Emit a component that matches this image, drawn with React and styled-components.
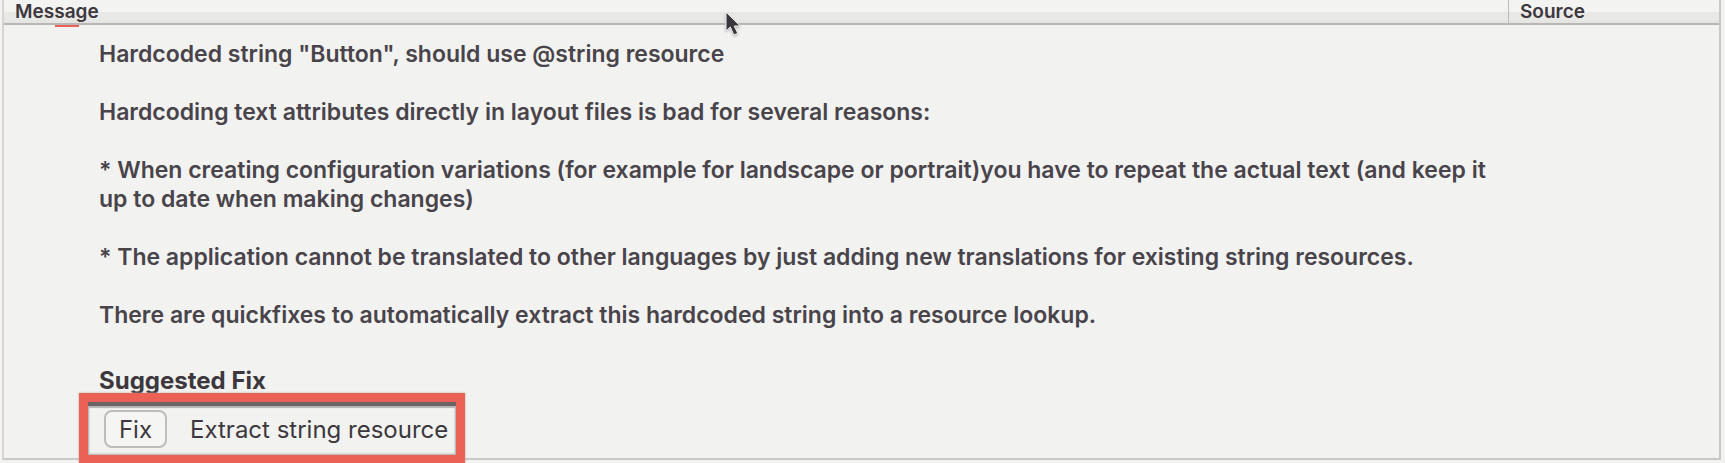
import React from "react";
import styled, { createGlobalStyle } from "styled-components";

const GlobalStyle = createGlobalStyle`
  * { box-sizing: border-box; }
  body {
    margin: 0;
    background: #f2f2f1;
    color: #3c383d;
    font-family: Inter, "Liberation Sans", sans-serif;
    font-size: 24px;
    line-height: 29px;
  }
`;

const Page = styled.main`
  position: relative;
  padding: 0 4px 4px 2px;
`;

const Table = styled.table`
  width: 100%;
  table-layout: fixed;
  border-collapse: separate;
  border-spacing: 0;
  border: 2px solid #c9c7c7;
  border-top: 0;
  border-left-color: #d9d3d3;
`;

const HeadCell = styled.th`
  width: ${(p) => p.$width || "auto"};
  height: 25px;
  padding: 1px 0 0 11px;
  border-bottom: 2px solid #b9b7b6;
  border-left: ${(p) => (p.$divided ? "1px solid #bdbbbb" : "0")};
  background: linear-gradient(#f3f3f2 0 12px, #e8e8e7 12px 19px, #e3e3e2);
  font-size: 19px;
  font-weight: 600;
  line-height: 20px;
  text-align: left;
`;

const DetailCell = styled.td`
  padding: 15px 212px 10px 95px;
  vertical-align: top;
`;

const Paragraph = styled.p`
  margin: 0 0 29px;
  color: #48444a;
  font-size: 23px;
  font-weight: 600;
`;

const FixHeading = styled.h2`
  margin: 36px 0 0;
  font-size: 24px;
  font-weight: 700;
  line-height: 29px;
`;

const FixRow = styled.div`
  position: relative;
  display: flex;
  width: fit-content;
  align-items: center;
  gap: 23px;
  margin-top: 15px;
  padding-left: 5px;
`;

const FixButton = styled.button`
  width: 63px;
  height: 38px;
  padding: 0;
  border: 2px solid #bebdbc;
  border-radius: 8px;
  background: #f5f5f4;
  color: inherit;
  font: inherit;
`;

const Highlight = styled.div`
  position: absolute;
  inset: -17px -17px -16px -20px;
  border: 9px solid #ec6156;
  box-shadow: 0 0 2px #aaa, inset 0 4px 0 #686466, inset 0 6px 1px #b5b3b3,
    inset 0 0 2px 1px #aaa;
  pointer-events: none;
`;

const ErrorMark = styled.span`
  position: absolute;
  top: 25px;
  left: 55px;
  width: 24px;
  height: 2px;
  background: #ec6156;
`;

const Pointer = styled.svg`
  position: absolute;
  top: 10px;
  left: 723px;
  filter: drop-shadow(0 1px 1px #aaa);
`;

const paragraphs = [
  'Hardcoded string "Button", should use @string resource',
  "Hardcoding text attributes directly in layout files is bad for several reasons:",
  "* When creating configuration variations (for example for landscape or portrait)you have to repeat the actual text (and keep it up to date when making changes)",
  "* The application cannot be translated to other languages by just adding new translations for existing string resources.",
  "There are quickfixes to automatically extract this hardcoded string into a resource lookup.",
];

export default function App() {
  return (
    <Page>
      <GlobalStyle />
      <Table>
        <thead>
          <tr>
            <HeadCell scope="col">Message</HeadCell>
            <HeadCell scope="col" $width="211px" $divided>Source</HeadCell>
          </tr>
        </thead>
        <tbody>
          <tr>
            <DetailCell colSpan={2}>
              {paragraphs.map((text) => (
                <Paragraph key={text}>{text}</Paragraph>
              ))}
              <FixHeading>Suggested Fix</FixHeading>
              <FixRow>
                <FixButton type="button" aria-describedby="fix-label">Fix</FixButton>
                <span id="fix-label">Extract string resource</span>
                <Highlight />
              </FixRow>
            </DetailCell>
          </tr>
        </tbody>
      </Table>
      <ErrorMark />
      <Pointer width="20" height="28" viewBox="0 0 20 28" aria-hidden="true">
        <path
          d="M3 2V21l4.3-4 3.5 8 4-1.7-3.6-7.3h6z"
          fill="#3a363b"
          stroke="#f6f6f6"
          strokeWidth="1"
        />
      </Pointer>
    </Page>
  );
}
